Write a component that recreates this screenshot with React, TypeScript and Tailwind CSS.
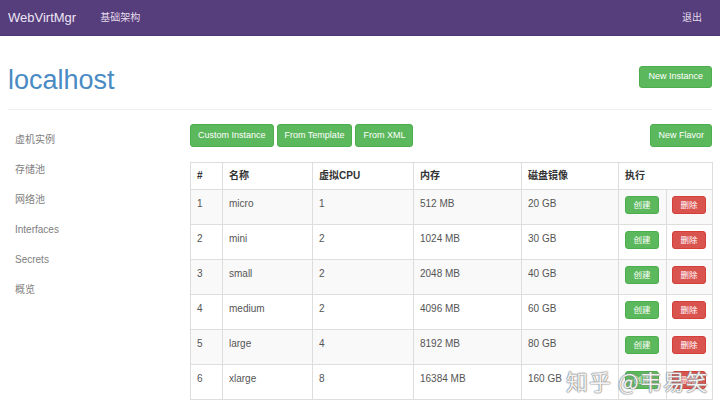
import React from "react";

const flavors = [
  { id: 1, name: "micro", cpu: 1, mem: "512 MB", disk: "20 GB" },
  { id: 2, name: "mini", cpu: 2, mem: "1024 MB", disk: "30 GB" },
  { id: 3, name: "small", cpu: 2, mem: "2048 MB", disk: "40 GB" },
  { id: 4, name: "medium", cpu: 2, mem: "4096 MB", disk: "60 GB" },
  { id: 5, name: "large", cpu: 4, mem: "8192 MB", disk: "80 GB" },
  { id: 6, name: "xlarge", cpu: 8, mem: "16384 MB", disk: "160 GB" },
];

const side = ["虚机实例", "存储池", "网络池", "Interfaces", "Secrets", "概览"];

export default function App() {
  return (
    <div className="relative w-[720px] h-[413px] overflow-hidden bg-white font-['Liberation_Sans','Noto_Sans_CJK_SC',sans-serif] text-[#333]">
      <nav className="h-[36px] bg-[#563d7c] flex items-center px-[8px] border-b border-[#4e3770]">
        <span className="text-[13px] text-[#ece6f3]">WebVirtMgr</span>
        <span className="ml-[24px] text-[10px] text-[#e2dbea]">基础架构</span>
        <span className="ml-auto mr-[10px] text-[10px] text-[#e2dbea]">退出</span>
      </nav>
      <div className="px-[8px]">
        <div className="mt-[30px] flex items-start justify-between">
          <h1 className="mt-[1px] text-[27px] leading-[26px] text-[#4a8bc4]">localhost</h1>
          <button className="h-[22px] px-[8px] rounded-[3px] bg-[#5cb85c] text-white text-[9px] border border-[#4cae4c]">New Instance</button>
        </div>
        <div className="mt-[16px] border-t border-[#eeeeee]" />
        <div className="mt-[14px] flex">
          <div className="w-[182px] shrink-0 flex flex-col">
            {side.map((s) => (
              <div key={s} className="h-[30px] flex items-center pl-[7px] text-[10px] text-[#808080]">
                {s}
              </div>
            ))}
          </div>
          <div className="flex-1 min-w-0">
            <div className="flex items-start gap-[3px]">
              <button className="h-[23px] px-[7px] rounded-[3px] bg-[#5cb85c] text-white text-[9px] border border-[#4cae4c]">Custom Instance</button>
              <button className="h-[23px] px-[7px] rounded-[3px] bg-[#5cb85c] text-white text-[9px] border border-[#4cae4c]">From Template</button>
              <button className="h-[23px] px-[7px] rounded-[3px] bg-[#5cb85c] text-white text-[9px] border border-[#4cae4c]">From XML</button>
              <button className="ml-auto h-[23px] px-[7px] rounded-[3px] bg-[#5cb85c] text-white text-[9px] border border-[#4cae4c]">New Flavor</button>
            </div>
            <table className="mt-[15px] w-full table-fixed border-collapse text-[10px]">
              <colgroup>
                <col className="w-[32px]" />
                <col className="w-[90px]" />
                <col className="w-[101px]" />
                <col className="w-[108px]" />
                <col className="w-[97px]" />
                <col className="w-[48px]" />
                <col className="w-[46px]" />
              </colgroup>
              <thead>
                <tr className="h-[27px]">
                  {["#", "名称", "虚拟CPU", "内存", "磁盘镜像"].map((h) => (
                    <th key={h} className="border border-[#dddddd] px-[6px] text-left font-bold text-[#333] leading-[14px]">
                      {h}
                    </th>
                  ))}
                  <th colSpan={2} className="border border-[#dddddd] px-[6px] text-left font-bold text-[#333] leading-[14px]">
                    执行
                  </th>
                </tr>
              </thead>
              <tbody>
                {flavors.map((f, i) => (
                  <tr key={f.id} className={`h-[35px] ${i % 2 === 0 ? "bg-[#f9f9f9]" : "bg-white"}`}>
                    <td className="border border-[#dddddd] px-[6px] pt-[7px] align-top leading-[14px] text-[#555]">{f.id}</td>
                    <td className="border border-[#dddddd] px-[6px] pt-[7px] align-top leading-[14px] text-[#555]">{f.name}</td>
                    <td className="border border-[#dddddd] px-[6px] pt-[7px] align-top leading-[14px] text-[#555]">{f.cpu}</td>
                    <td className="border border-[#dddddd] px-[6px] pt-[7px] align-top leading-[14px] text-[#555]">{f.mem}</td>
                    <td className="border border-[#dddddd] px-[6px] pt-[7px] align-top leading-[14px] text-[#555]">{f.disk}</td>
                    <td className="border border-[#dddddd] pl-[6px] pt-[6px] align-top">
                      <button className="w-[34px] h-[18px] rounded-[3px] bg-[#5cb85c] text-white text-[8.5px] leading-[16px] border border-[#4cae4c]">创建</button>
                    </td>
                    <td className="border border-[#dddddd] pl-[5px] pt-[6px] align-top">
                      <button className="w-[34px] h-[18px] rounded-[3px] bg-[#d9534f] text-white text-[8.5px] leading-[16px] border border-[#d43f3a]">删除</button>
                    </td>
                  </tr>
                ))}
              </tbody>
            </table>
          </div>
        </div>
      </div>
      <div className="absolute left-[566px] top-[366px] whitespace-nowrap text-[22px] leading-[28px] tracking-[1px] text-white/90 font-['Noto_Sans_CJK_SC',sans-serif] [text-shadow:0_0_1px_#777,0_0_1px_#777,0_0_2px_#999]">
        知乎 @韦易笑
      </div>
    </div>
  );
}
